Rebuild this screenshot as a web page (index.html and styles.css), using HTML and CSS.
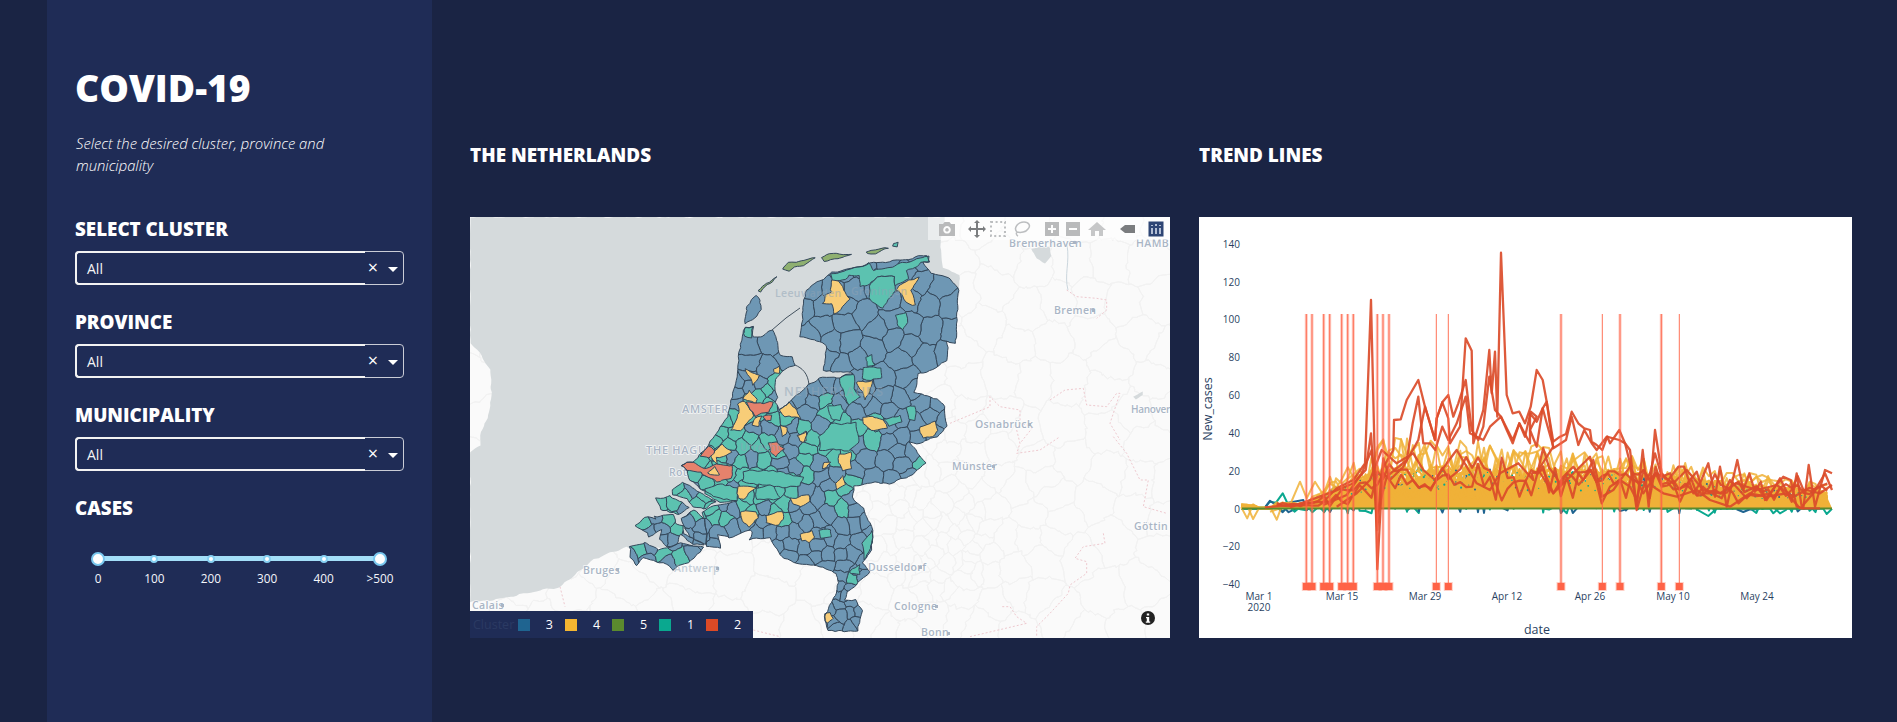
FILE: index.html
```html
<!DOCTYPE html>
<html lang="en">
<head>
<meta charset="utf-8">
<title>COVID-19</title>
<link rel="stylesheet" href="styles.css">
</head>
<body>
<div class="app">
  <aside class="sidebar">
    <h1>COVID-19</h1>
    <p class="intro">Select the desired cluster, province and municipality</p>
    <h3 class="label label-first">SELECT CLUSTER</h3>
    <div class="select"><div class="value">All</div><div class="controls"><span class="clear">×</span><span class="caret"></span></div></div>
    <h3 class="label">PROVINCE</h3>
    <div class="select"><div class="value">All</div><div class="controls"><span class="clear">×</span><span class="caret"></span></div></div>
    <h3 class="label">MUNICIPALITY</h3>
    <div class="select"><div class="value">All</div><div class="controls"><span class="clear">×</span><span class="caret"></span></div></div>
    <h3 class="label">CASES</h3>
    <div class="slider">
      <div class="track">
        <span class="handle"></span><span class="dot"></span><span class="dot"></span><span class="dot"></span><span class="dot"></span><span class="handle"></span>
      </div>
      <div class="marks"><span>0</span><span>100</span><span>200</span><span>300</span><span>400</span><span>&gt;500</span></div>
    </div>
  </aside>
  <main class="main">
    <section class="col col-map">
      <h2>THE NETHERLANDS</h2>
      <div class="panel map">
        <svg class="map-svg" viewBox="470 217 700 421" width="700" height="421">
          <defs><clipPath id="nl"></clipPath></defs>
          <rect class="land" x="470" y="217" width="700" height="421"/>
          <g id="roads"></g>
          <g id="borders"></g>
          <path id="sea" class="sea" d=""/>
          <g id="water"></g>
          <g class="city">
            <text x="1009" y="247">Bremerhaven</text>
            <text class="caps-clip" x="1136" y="247">HAMB</text>
            <text x="1054" y="314">Bremen</text>
            <text x="975" y="428">Osnabrück</text>
            <text class="tight" x="1131" y="413">Hanover</text>
            <text x="952" y="470">Münster</text>
            <text x="1134" y="530">Göttin</text>
            <text x="868" y="571">Dusseldorf</text>
            <text x="894" y="610">Cologne</text>
            <text x="921" y="636">Bonn</text>
            <text x="583" y="574">Bruges</text>
            <text x="472" y="609">Calais</text>
            <text class="caps" x="646" y="454">THE HAGUE</text>
            <text class="caps" x="682" y="413">AMSTERDAM</text>
            <text x="669" y="476">Rotterdam</text>
            <rect x="1073" y="241" width="3" height="3"/><rect x="1092" y="309" width="3" height="3"/><rect x="1028" y="423" width="3" height="3"/>
            <rect x="992" y="465" width="3" height="3"/><rect x="919" y="566" width="3" height="3"/><rect x="935" y="605" width="3" height="3"/>
            <rect x="947" y="632" width="3" height="3"/><rect x="616" y="568" width="3" height="3"/><rect x="716" y="567" width="3" height="3"/><rect x="501" y="604" width="3" height="3"/>
          </g>
          <g id="cells"></g>
          <g id="shapes"></g>
          <path id="outline" class="outline" d=""/>
          <path id="dikes" class="dike" d=""/>
          <g class="city city-over">
            <text x="775" y="297">Leeuwarden</text>
            <text x="851" y="295">Groningen</text>
            <text class="caps big" x="784" y="396">NETHERLANDS</text>
            <text x="740" y="451">Utrecht</text>
            <text x="674" y="572">Antwerp</text>
          </g>
        </svg>
        <div class="modebar">
          <span class="tool tool-a"><svg viewBox="0 0 20 20"><path class="ic" fill-rule="evenodd" d="M2 5h4l1.500-2h5L14 5h4v12H2zM10 7a3.800 3.800 0 1 0 .01 0zM10 9a1.800 1.800 0 1 1-.01 0z"/></svg></span>
          <span class="tool tool-b"><svg viewBox="0 0 20 20"><path class="ic-dark" d="M10 1l3 3h-2v5h5V7l3 3-3 3v-2h-5v5h2l-3 3-3-3h2v-5H4v2l-3-3 3-3v2h5V4H7z"/></svg></span>
          <span class="tool tool-c"><svg viewBox="0 0 20 20"><rect class="ic-dash" x="3" y="3" width="14" height="14"/></svg></span>
          <span class="tool tool-d"><svg viewBox="0 0 20 20"><path class="ic-line" d="M5 13C1 9 6 3 12 3c5 0 7 4 4 7-2 3-7 4-11 3zM5 13c-1 1-1 3 1 4"/></svg></span>
          <span class="tool tool-b"><svg viewBox="0 0 20 20"><path class="ic" fill-rule="evenodd" d="M3 3h14v14H3zM9 6v3H6v2h3v3h2v-3h3V9h-3V6z"/></svg></span>
          <span class="tool tool-c"><svg viewBox="0 0 20 20"><path class="ic" fill-rule="evenodd" d="M3 3h14v14H3zM6 9v2h8V9z"/></svg></span>
          <span class="tool tool-d"><svg viewBox="0 0 20 20"><path class="ic-soft" d="M10 3l9 8h-3v6h-4v-5H8v5H4v-6H1z"/></svg></span>
          <span class="tool tool-b"><svg viewBox="0 0 20 20"><path class="ic-dark" d="M3 10l5-4h10v8H8z"/></svg></span>
          <span class="tool tool-a"><svg viewBox="0 0 20 20"><rect class="ic-active" x="2.500" y="2.500" width="15" height="15"/><path class="ic-bars" d="M6 6v1M6 9v6M10 5v2M10 9v6M14 6v1M14 9v6"/></svg></span>
        </div>
        <div class="legend">
          <span class="legend-title">Cluster</span>
          <span class="legend-item"><i class="swatch s3"></i>3</span>
          <span class="legend-item"><i class="swatch s4"></i>4</span>
          <span class="legend-item"><i class="swatch s5"></i>5</span>
          <span class="legend-item"><i class="swatch s1"></i>1</span>
          <span class="legend-item"><i class="swatch s2"></i>2</span>
        </div>
        <svg class="info" viewBox="0 0 14 14"><circle class="info-bg" cx="7" cy="7" r="7"/><path class="info-i" d="M5.800 2.600h2.400v2H5.800zM5 6h3.200v4.400h1v1.300H4.800v-1.300h1V7.300H5z"/></svg>
      </div>
    </section>
    <section class="col col-chart">
      <h2>TREND LINES</h2>
      <div class="panel chart">
        <svg class="chart-svg" viewBox="1199 217 653 421" width="653" height="421">
          <g id="lines-low"></g>
          <g id="lines-yellow"></g>
          <g id="specks"></g>
          <path class="zero" d="M1242 508.600H1832"/>
          <g id="lines-red"></g>
          <g id="events"></g>
          <g class="ytick">
            <text x="1240" y="247.500">140</text><text x="1240" y="285.500">120</text><text x="1240" y="322.500">100</text><text x="1240" y="360.500">80</text><text x="1240" y="398.500">60</text>
            <text x="1240" y="436.500">40</text><text x="1240" y="474.500">20</text><text x="1240" y="512.500">0</text><text x="1240" y="549.500">−20</text><text x="1240" y="587.500">−40</text>
          </g>
          <g class="xtick">
            <text x="1259" y="599.500">Mar 1</text><text x="1259" y="611">2020</text>
            <text x="1342" y="599.500">Mar 15</text><text x="1425" y="599.500">Mar 29</text><text x="1507" y="599.500">Apr 12</text>
            <text x="1590" y="599.500">Apr 26</text><text x="1673" y="599.500">May 10</text><text x="1757" y="599.500">May 24</text>
          </g>
          <text class="axis-x" x="1537" y="634">date</text>
          <text class="axis-y" transform="translate(1212 409) rotate(-90)">New_cases</text>
        </svg>
      </div>
    </section>
  </main>
</div>
<script src="script.js"></script>
</body>
</html>
```
FILE: styles.css
```css
* { box-sizing: border-box; }
html, body { margin: 0; height: 100%; }
body { background: #1a2444; color: #fff; font-family: "Open Sans", "Liberation Sans", sans-serif; overflow: hidden; }
.app { display: flex; height: 722px; padding-left: 47px; }

.sidebar { width: 385px; height: 722px; background: #1f2c56; padding: 66px 28px 0; flex: none; }
h1 { margin: 0 0 23px; font-size: 37.300px; line-height: 43px; font-weight: 800; }
.intro { margin: 0 0 0 1px; width: 280px; font-size: 14.800px; line-height: 22px; font-style: italic; font-weight: 300; }
.label { margin: 25px 0 10px; font-size: 18.800px; line-height: 24px; font-weight: 800; }
.label-first { margin-top: 41px; }

.select { display: flex; height: 34px; width: 329px; border: 1px solid #c9ccd6; border-radius: 4px; }
.value { flex: 1; margin: -1px 0 -1px -1px; border: 2px solid #f2f2f2; border-right: 0; border-radius: 4px 0 0 4px; padding: 0 10px; font-size: 14px; line-height: 32px; color: #f4f4f4; }
.controls { width: 38px; display: flex; align-items: center; justify-content: flex-start; }
.clear { width: 14px; margin-left: 1px; font-size: 18px; line-height: 28px; height: 30px; text-align: center; }
.caret { margin-left: 8px; margin-top: 2px; border: 5px solid transparent; border-top-color: #fff; border-bottom: 0; }

.slider { margin: 36px 0 0 23px; width: 282px; }
.track { height: 5px; background: #a3dff8; display: flex; justify-content: space-between; align-items: center; }
.handle { width: 14px; height: 14px; margin: 0 -7px; border-radius: 50%; background: #fff; border: 2px solid #79c7ee; }
.dot { width: 8px; height: 8px; margin: 0 -4px; border-radius: 50%; background: #fff; border: 2px solid #86d0f2; }
.marks { display: flex; justify-content: space-between; margin-top: 10px; font-size: 11.800px; line-height: 15px; color: #f4f6fb; }
.marks span { width: 0; display: flex; justify-content: center; }

.main { display: flex; padding-left: 38px; gap: 29px; }
.col { display: flex; flex-direction: column; padding-top: 143px; }
.col-map { width: 700px; }
.col-chart { width: 653px; }
h2 { margin: 0 0 50px; font-size: 18.900px; line-height: 24px; font-weight: 800; }
.panel { height: 421px; position: relative; overflow: hidden; }
.map-svg, .chart-svg { display: block; }
.chart { background: #fff; }

.land { fill: #fafafa; }
.sea { fill: #d5dadc; }
.road { fill: none; stroke: #f2f2f2; stroke-width: 1; }
.border-line { fill: none; stroke: #eec9cf; stroke-width: 1; stroke-dasharray: 2 2; }
.water-blob { fill: #d5dadc; }
.river { fill: none; stroke: #cbd6dd; stroke-width: 1; }
.city { font-family: "Open Sans", sans-serif; font-size: 10.500px; font-weight: 600; letter-spacing: .35px; fill: #a9b5c5; }
.city text { paint-order: stroke; stroke: #fff; stroke-opacity: .75; stroke-width: 1.500px; }
.city .caps { font-size: 11px; letter-spacing: .7px; }
.city .caps-clip { font-size: 10.500px; letter-spacing: .4px; }
.city .big { font-size: 12.500px; letter-spacing: 1px; }
.city .tight { letter-spacing: -.3px; font-size: 10px; }
.city-over { opacity: .5; fill: #8fa3b5; }
.city-over text { stroke: none; }
.cell, .shape { stroke: #34475a; stroke-width: 1; stroke-linejoin: round; }
.c1 { fill: #5cc2b0; }
.c2 { fill: #e5826c; }
.c3 { fill: #6e97b4; }
.c4 { fill: #f8cd78; }
.c5 { fill: #8fb070; }
.outline { fill: none; stroke: #34475a; stroke-width: 1; stroke-linejoin: round; }
.dike { fill: none; stroke: #44525f; stroke-width: 1; }

.modebar { position: absolute; top: 0; left: 458px; width: 242px; height: 23px; background: rgba(255, 255, 255, .5); display: flex; align-items: center; }
.tool { width: 20px; height: 20px; display: block; flex: none; }
.tool svg { display: block; width: 20px; height: 20px; }
.tool-a { margin-left: 9px; }
.tool-b { margin-left: 10px; }
.tool-c { margin-left: 1px; }
.tool-d { margin-left: 4px; }
.ic { fill: #b9babb; }
.ic-soft { fill: #c6c7c8; }
.ic-dark { fill: #7b7d7f; }
.ic-dash { fill: none; stroke: #bcbec0; stroke-width: 2; stroke-dasharray: 2 2.600; }
.ic-line { fill: none; stroke: #bcbec0; stroke-width: 1.500; }
.ic-active { fill: #2f4675; }
.ic-bars { fill: none; stroke: #dfe6f3; stroke-width: 1.500; }

.legend { position: absolute; left: 0; bottom: 0; width: 283px; height: 27px; background: #1f2c56; display: flex; align-items: center; font-size: 12.500px; }
.legend-title { width: 50px; padding-left: 3px; color: #2b3a63; }
.legend-item { width: 49.300px; display: flex; align-items: center; line-height: 27px; }
.swatch { width: 12px; height: 12px; margin-right: 16px; }
.s1 { background: #0aa88f; }
.s2 { background: #dc4a26; }
.s3 { background: #1f6490; }
.s4 { background: #f4b631; }
.s5 { background: #5b8a2e; }
.info { position: absolute; right: 15px; bottom: 13px; width: 14px; height: 14px; }
.info-bg { fill: #222; }
.info-i { fill: #fff; }

.ytick text { font-size: 10px; fill: #2a3f5f; text-anchor: end; }
.xtick text { font-size: 10px; fill: #2a3f5f; text-anchor: middle; }
.axis-x, .axis-y { font-size: 12.500px; fill: #2a3f5f; text-anchor: middle; }
.zero { stroke: #5b8a2e; stroke-width: 2; fill: none; }
.ln { fill: none; stroke-linejoin: round; }
.ln-y { stroke: #f0b138; stroke-width: 2; }
.ln-y2 { stroke: #f0b138; stroke-width: 2; opacity: .85; }
.area-y { fill: #f0b138; }
.ln-t { stroke: #0aa88f; stroke-width: 2; }
.ln-b { stroke: #1f6490; stroke-width: 2; }
.ln-r { stroke: #db4c2a; stroke-width: 2.300; opacity: .92; }
.speck-t { fill: #0aa88f; }
.speck-b { fill: #1f6490; }
.ev-halo { stroke: #ff6347; stroke-width: 3; opacity: .35; }
.ev-line { stroke: #ff6347; stroke-width: 1; opacity: .9; }
.ev-mark { fill: #ff6347; stroke: #ff6347; stroke-opacity: .3; stroke-width: 2; }
```
FILE: script.js
```js
(function () {
  var NS = 'http://www.w3.org/2000/svg';
  var OFF = { 3: [460, 210], 4: [820, 210], 5: [460, 430], 6: [820, 430], 7: [1190, 210], 8: [1190, 430], 9: [1530, 210], 10: [1530, 430] };
  function P(z, a) {
    var o = OFF[z], r = [];
    for (var i = 0; i < a.length; i += 2) r.push([o[0] + a[i] / 3, o[1] + a[i + 1] / 3]);
    return r;
  }
  function A(a) {
    var r = [];
    for (var i = 0; i < a.length; i += 2) r.push([a[i], a[i + 1]]);
    return r;
  }
  var seed = 20200301;
  function rnd() {
    seed = (seed + 0x6D2B79F5) | 0;
    var t = Math.imul(seed ^ (seed >>> 15), 1 | seed);
    t = (t + Math.imul(t ^ (t >>> 7), 61 | t)) ^ t;
    return ((t ^ (t >>> 14)) >>> 0) / 4294967296;
  }
  function add(parent, tag, cls, attrs) {
    var e = document.createElementNS(NS, tag);
    if (cls) e.setAttribute('class', cls);
    for (var k in attrs) e.setAttribute(k, attrs[k]);
    parent.appendChild(e);
    return e;
  }
  function el(id) { return document.getElementById(id); }

  /* ---------- map geometry ---------- */
  function wob(poly, amp) {
    var d = '';
    for (var i = 0; i < poly.length; i++) {
      var a = poly[i], b = poly[(i + 1) % poly.length];
      var len = Math.hypot(b[0] - a[0], b[1] - a[1]), n = Math.max(1, Math.ceil(len / 3.5));
      for (var k = 0; k < n; k++) {
        var x = a[0] + (b[0] - a[0]) * k / n, y = a[1] + (b[1] - a[1]) * k / n;
        var dx = amp * (Math.sin(x * .31 + y * .17) + .6 * Math.sin(x * .73 - y * .41) + .45 * Math.sin(x * 1.7 + y * 1.3));
        var dy = amp * (Math.sin(x * .23 - y * .29) + .6 * Math.sin(x * .61 + y * .53) + .45 * Math.sin(x * 1.4 - y * 1.9));
        d += (d ? 'L' : 'M') + (x + dx).toFixed(1) + ' ' + (y + dy).toFixed(1);
      }
    }
    return d + 'Z';
  }
  function clipHalf(poly, ax, ay, bx, by) {
    var mx = (ax + bx) / 2, my = (ay + by) / 2, nx = bx - ax, ny = by - ay, out = [];
    for (var i = 0; i < poly.length; i++) {
      var p = poly[i], q = poly[(i + 1) % poly.length];
      var dp = (p[0] - mx) * nx + (p[1] - my) * ny, dq = (q[0] - mx) * nx + (q[1] - my) * ny;
      if (dp <= 0) out.push(p);
      if ((dp < 0 && dq > 0) || (dp > 0 && dq < 0)) {
        var t = dp / (dp - dq);
        out.push([p[0] + (q[0] - p[0]) * t, p[1] + (q[1] - p[1]) * t]);
      }
    }
    return out;
  }
  function voronoi(sites, box) {
    return sites.map(function (s, i) {
      var poly = box;
      for (var j = 0; j < sites.length && poly.length; j++) {
        if (j !== i && Math.abs(sites[j][0] - s[0]) < 150 && Math.abs(sites[j][1] - s[1]) < 150) poly = clipHalf(poly, s[0], s[1], sites[j][0], sites[j][1]);
      }
      return poly;
    });
  }
  function inside(pt, poly) {
    var c = false;
    for (var i = 0, j = poly.length - 1; i < poly.length; j = i++) {
      if ((poly[i][1] > pt[1]) !== (poly[j][1] > pt[1]) && pt[0] < (poly[j][0] - poly[i][0]) * (pt[1] - poly[i][1]) / (poly[j][1] - poly[i][1]) + poly[i][0]) c = !c;
    }
    return c;
  }
  function dart(test, radius, box, tries) {
    var pts = [];
    for (var n = 0; n < tries; n++) {
      var p = [box[0] + rnd() * (box[2] - box[0]), box[1] + rnd() * (box[3] - box[1])];
      if (!test(p)) continue;
      var r = radius(p), ok = true;
      for (var i = 0; i < pts.length; i++) {
        if (Math.hypot(pts[i][0] - p[0], pts[i][1] - p[1]) < r) { ok = false; break; }
      }
      if (ok) pts.push(p);
    }
    return pts;
  }

  /* outlines of the mainland and the islands */
  var main = A([745,327, 753,327, 752,337, 763,336, 772,330, 778,343, 780,355, 793,357, 795,365, 788,368, 780,373, 775,380, 777,397, 775,403, 780,410, 790,402, 808,385, 820,378, 840,377, 853,373, 838,372, 824,370, 826,345, 820,341, 800,337, 803,307, 807,290, 820,280,
    832,273, 873,263, 903,260, 927,255, 930,262, 923,263, 930,273, 948,278, 958,288, 957,300, 958,310, 955,343, 947,342, 947,360, 927,373, 917,373, 918,383, 915,392, 937,400, 945,407, 946,427, 937,437, 920,443, 910,443, 925,463, 913,475, 890,483, 868,483, 853,487, 853,497, 863,508, 873,530, 872,550, 863,563, 870,572, 858,582, 848,592, 845,600, 855,600, 862,610, 857,630, 848,632, 828,630, 824,617, 832,600, 836,592, 838,580, 837,573, 820,567,
    793,562, 780,555, 770,537, 750,540, 753,532, 748,530, 730,538, 718,535, 720,548, 707,547, 705,520, 702,512, 717,505, 737,502, 720,498, 703,490, 690,480, 687,470, 681,465, 693,462, 705,450, 718,430, 727,417, 737,380, 738,357, 743,337]);
  var islands = [
    P(5, [635,180,670,158,720,190,770,215,740,235,700,230,680,205,640,195]),
    P(5, [590,205,630,198,640,205,690,235,650,252,600,240]),
    P(5, [527,287,555,262,585,265,580,258,640,255,645,280,670,290,670,310,690,320,730,345,700,340,660,310,650,345,620,348,598,325,605,300,565,320,560,310]),
    P(5, [510,350,555,338,595,360,660,340,730,350,700,385,640,420,620,400,550,385,530,405,510,380]),
    P(5, [665,265,700,240,735,270,740,345,725,340,690,320,672,295])
  ];
  var outlines = [main].concat(islands);
  function inNL(p) { return outlines.some(function (o) { return inside(p, o); }); }

  var clip = el('nl'), outlineD = '';
  outlines.forEach(function (o) {
    var d = wob(o, .6);
    add(clip, 'path', '', { d: d });
    outlineD += d;
  });
  el('outline').setAttribute('d', outlineD);
  el('dikes').setAttribute('d', 'M772 330L786 318L800 308M795 365C802 368 808 373 809 385');

  /* sea */
  var sea = A([470,217, 945,217, 940,247, 943,267, 960,275, 958,300, 900,390, 860,380, 800,420, 740,500, 720,535, 718,545, 660,548, 632,550, 627,547, 613,552, 593,560, 560,587, 527,593, 493,600, 470,602, 470,452, 481,445, 480,435, 488,415, 492,393, 490,370, 480,352, 470,343]);
  el('sea').setAttribute('d', wob(sea, .5));

  /* background road network */
  var roads = el('roads');
  var roadSites = dart(function () { return true; }, function (p) {
    var d = Math.hypot(p[0] - 935, p[1] - 530);
    return d < 60 ? 9 : (d < 130 ? 20 : 30);
  }, [470, 217, 1170, 638], 4000);
  voronoi(roadSites, [[440, 190], [1200, 190], [1200, 670], [440, 670]]).forEach(function (c) {
    if (c.length) add(roads, 'path', 'road', { d: wob(c, 1.6) });
  });

  /* dashed borders */
  var borders = el('borders');
  [
    P(4, [740,240,770,260,830,265,860,270,860,300,830,325]),
    P(4, [390,640,510,590,510,560,540,590,600,600,600,640,640,650,600,700]),
    P(4, [690,570,735,540,790,535,800,585,860,590,890,550,900,550,880,610,870,640,900,690]),
    P(6, [590,0,600,40,590,70,660,60,720,20]),
    P(6, [880,20,920,70,960,150,985,150,970,230,1040,250]),
    P(6, [850,310,855,340,790,350,765,385,800,395,800,430,750,465,745,490,690,550,650,590,650,620]),
    P(6, [450,620,620,580,590,560,570,530,545,530]),
    P(5, [300,470,315,530]),
    P(5, [880,600,960,620])
  ].forEach(function (l) {
    add(borders, 'polyline', 'border-line', { points: l.map(function (p) { return p.join(','); }).join(' ') });
  });

  /* water on the German side */
  var water = el('water');
  add(water, 'path', 'water-blob', { d: wob(P(4, [635,115,690,110,695,140,675,160,650,145]), .4) });
  add(water, 'path', 'water-blob', { d: wob(P(4, [940,560,968,545,968,555,948,568]), .15) });
  add(water, 'path', 'river', { d: 'M1067 245C1070 262 1064 275 1068 290' });

  /* municipalities */
  function radius(p) {
    var x = p[0], y = p[1];
    if (y < 375) return 17;
    if (x < 800 && y < 525) return 10;
    if (y > 575) return 7.5;
    if (x > 860) return 13;
    return 11;
  }
  var sites = dart(inNL, radius, [625, 250, 965, 635], 18000);
  function colorFor(s) {
    var x = s[0], y = s[1], r = rnd();
    if (y < 375) return 3;
    if (x < 790 && y >= 375 && y < 520) return r < .68 ? 1 : 3;
    if (x >= 790 && x < 880 && y >= 420 && y < 490) return r < .5 ? 1 : 3;
    if (x >= 790 && x < 880 && y >= 395 && y < 505) return r < .3 ? 1 : 3;
    if (y >= 505 && x < 780) return r < .22 ? 1 : 3;
    return r < .05 ? 1 : 3;
  }
  var cellsG = add(el('cells'), 'g', '', { 'clip-path': 'url(#nl)' });
  voronoi(sites, [[600, 230], [990, 230], [990, 660], [600, 660]]).forEach(function (c, i) {
    if (c.length) add(cellsG, 'path', 'cell c' + colorFor(sites[i]), { d: wob(c, .9) });
  });

  /* hand-placed patches */
  var shapes = [
    [3, 3, [855,320,860,285,885,255,903,270,903,300,880,330,855,340]],
    [1, 3, [855,350,878,350,872,385,855,382]],
    [5, 3, [892,240,920,218,952,202,925,225,900,243]],
    [5, 3, [968,175,985,160,1065,145,1040,160,985,182]],
    [5, 4, [5,140,30,132,95,132,60,145,15,152]],
    [5, 4, [137,125,205,112,175,127,145,132]],
    [1, 4, [222,100,235,100,232,110,222,108]],
    [1, 4, [32,195,148,160,160,183,232,165,327,138,328,155,305,160,258,185,262,205,225,230,225,200,175,200,150,225,118,228,120,200,85,195,75,210,40,215]],
    [1, 4, [175,200,225,200,225,240,190,295,150,270,150,230]],
    [1, 4, [230,315,258,308,262,335,245,360,232,350]],
    [1, 4, [135,440,155,435,165,465,145,470]],
    [1, 4, [130,475,180,470,188,505,150,510,130,505]],
    [1, 4, [60,500,100,495,105,535,120,560,90,585,70,560]],
    [1, 4, [35,640,110,640,115,700,85,720,0,720,-5,680]],
    [1, 4, [25,590,60,585,75,605,60,630,30,625]],
    [1, 4, [190,625,243,618,245,635,205,650]],
    [1, 4, [262,590,285,590,285,630,265,630]],
    [1, 6, [125,340,155,300,160,340,135,390]],
    [1, 6, [85,430,120,402,120,435]],
    [1, 6, [0,300,30,300,35,322,0,322]],
    [1, 5, [735,175,790,160,835,175,832,215,780,215,735,190]],
    [1, 5, [890,175,935,165,960,205,890,210]],
    [1, 5, [850,125,920,120,1030,140,1020,170,940,170,850,155]],
    [4, 4, [35,210,55,215,70,240,90,265,65,300,45,310,35,280,10,280,20,255,35,245]],
    [4, 4, [265,210,300,205,275,240,285,285,265,280,245,250,225,240,240,225]],
    [4, 4, [130,620,145,620,190,630,200,655,155,660,130,640]],
    [4, 4, [300,650,345,635,355,660,340,680,310,685,300,670]],
    [4, 4, [110,520,155,510,150,545,135,570,125,545]],
    [4, 6, [60,75,90,65,95,115,65,120,55,95]],
    [4, 6, [45,160,70,138,78,165,50,178]],
    [4, 6, [12,555,30,545,42,565,25,580,15,575]],
    [4, 6, [8,100,30,95,20,115,5,115]],
    [4, 5, [835,170,890,170,865,190,850,205,835,205]],
    [4, 5, [990,205,1045,195,1050,215,1020,230,1000,225]],
    [4, 5, [840,245,885,245,892,265,865,290,848,270]],
    [4, 5, [920,255,970,245,972,270,955,285,920,280]],
    [4, 5, [1020,315,1055,300,1068,320,1050,338,1025,330]],
    [4, 5, [1010,15,1035,5,1040,30,1022,38]],
    [4, 5, [750,70,790,45,812,68,798,78,770,80,772,105,755,85]],
    [4, 3, [858,475,880,490,900,495,880,530,865,500]],
    [4, 3, [848,570,870,540,890,565,885,578,855,570]],
    [4, 3, [830,580,855,575,880,615,840,660,815,660,840,610]],
    [4, 3, [880,625,905,620,895,650,880,645]],
    [4, 3, [960,600,990,575,1010,600,1025,625,975,620]],
    [4, 3, [1010,675,1040,665,1035,695,1018,695]],
    [4, 3, [940,475,955,470,958,488,942,488]],
    [4, 3, [960,650,980,650,980,675,965,680]],
    [2, 3, [860,578,940,578,925,605,890,620,870,600]],
    [2, 3, [910,620,932,615,930,632,915,635]],
    [2, 5, [722,80,745,45,765,60,745,85]],
    [2, 5, [662,105,700,95,730,115,770,105,820,105,815,145,770,155,720,130,680,120]],
    [4, 5, [745,130,765,112,778,135]],
    [2, 5, [925,40,945,38,975,55,950,80,930,65]]
  ];
  var shapeG = el('shapes');
  shapes.forEach(function (s) {
    add(shapeG, 'path', 'shape c' + s[0], { d: wob(P(s[1], s[2]), .7) });
  });

  /* ---------- chart ---------- */
  function X(d) { return 1259 + 5.92 * d; }
  function Y(v) { return 508.6 - 1.89 * v; }
  function pts(a) { return a.map(function (p) { return p[0].toFixed(1) + ',' + p[1].toFixed(1); }).join(' '); }
  function env(d) {
    if (d < 0) return 1.5;
    if (d < 3) return .4;
    if (d < 8) return 2;
    if (d < 21) return 2 + (d - 8) * 1.4;
    if (d < 58) return 20 - (d - 21) * .06;
    return Math.max(7, 18 - (d - 58) * .27);
  }
  function series(fn) {
    var a = [];
    for (var d = -3; d <= 96.8; d++) a.push([X(d), Y(fn(d))]);
    return a;
  }
  var low = el('lines-low');
  for (var i = 0; i < 6; i++) {
    add(low, 'polyline', 'ln ' + (i % 3 ? 'ln-t' : 'ln-b'), { points: pts(series(function (d) {
      if (d < 3) return 0;
      return (rnd() < .12 ? -rnd() * 2.6 : env(d) * rnd() * 1.1);
    })) });
  }
  add(low, 'polyline', 'ln ln-t', { points: pts(P(8, [155,235,225,232,240,215,258,218,278,190,295,225,320,232])) });
  add(low, 'polyline', 'ln ln-b', { points: pts(P(8, [225,232,240,212,258,225,340,210,350,240,400,205,435,170,450,230])) });
  add(low, 'polyline', 'ln ln-t', { points: pts(P(10, [500,238,535,258,560,236,720,236,730,250,745,236,880,236,890,252,906,236])) });
  add(low, 'polyline', 'ln ln-b', { points: pts(P(10, [620,238,640,246,660,238])) });

  var yel = el('lines-yellow');
  var area = [[X(-3), Y(0)]];
  for (var d0 = -3; d0 <= 96.8; d0 += 1) area.push([X(d0), Y(env(d0) * (.68 + rnd() * .2))]);
  area.push([X(96.8), Y(0)]);
  add(yel, 'polygon', 'area-y', { points: pts(area) });
  for (var j = 0; j < 20; j++) {
    add(yel, 'polyline', 'ln ln-y', { points: pts(series(function (d) {
      var r = rnd();
      return env(d) * (j < 8 ? .5 + r * .7 : .25 + r * .6);
    })) });
  }
  for (var k = 0; k < 5; k++) {
    add(yel, 'polyline', 'ln ln-y2', { points: pts(series(function (d) {
      return env(d) * (.5 + rnd() * (d > 8 && d < 50 ? 1.4 : 1.2)) - (rnd() < .04 ? 7 : 0);
    })) });
  }
  add(yel, 'polyline', 'ln ln-y2', { points: pts(P(8, [240,245,300,225,330,155,350,205,375,155,400,195,420,140,445,210])) });
  var sp = el('specks');
  for (var m = 0; m < 130; m++) {
    var dd = 14 + rnd() * 80, vv = env(dd) * (.5 + rnd() * .55);
    add(sp, 'circle', rnd() < .75 ? 'speck-t' : 'speck-b', { cx: X(dd).toFixed(1), cy: Y(vv).toFixed(1), r: (.5 + rnd() * .6).toFixed(1) });
  }

  var red = el('lines-red');
  function redEnv(d) {
    if (d < 10) return 3;
    if (d < 20) return 3 + (d - 10) * 1.6;
    if (d < 62) return 20;
    if (d < 72) return 20 - (d - 62) * .6;
    return 12;
  }
  for (var q = 0; q < 2; q++) {
    add(red, 'polyline', 'ln ln-r', { points: pts((function () {
      var a = [], v = 0;
      for (var d = 3; d <= 96.8; d++) {
        var e = redEnv(d);
        v = v * .45 + e * (.3 + rnd() * .9) * .6;
        a.push([X(d), Y(d < 8 ? 1 + rnd() * 2 : v + (rnd() < .12 ? e * .5 : 0) - (rnd() < .1 ? v * .6 : 0))]);
      }
      return a;
    })()) });
  }
  var traces = [
    P(8, [225,232,300,225,400,215,440,175,490,150,525,100]).concat(P(7, [543,270]), P(8, [562,418,580,85,600,150,640,110,685,30]), P(7, [705,590,735,690,740,625,757,577,775,625,780,700,810,650,827,385,845,422,850,700,880,600,898,420,905,550,915,425,922,620,933,128,950,555,968,610,988,605,1005,640,1022,590,1040,480]), P(9, [20,480,38,510,50,575,70,695,90,680,108,672,125,605,145,640,163,655,180,660,185,695,200,705,217,720,232,680,240,700,268,660,285,700,300,720]), P(10, [320,230,338,60,356,230,375,0,395,130,415,150,445,110,462,110,490,190,510,160,535,100,555,200,570,110,590,230,622,90,640,180,658,130,675,185,692,155,705,210,735,170,760,140,782,150,800,230,820,235,836,105,855,230,885,120,906,130])),
    P(8, [300,232,430,185,490,160,527,120,543,10,562,300,575,120,610,60]).concat(P(7, [612,630,632,628,650,570,685,510,705,590,735,690,740,625,757,577,775,555,790,620,805,580,827,510,845,660,865,690,880,650,898,500,915,600,933,620,950,660,968,700,988,640,1005,680,1022,605,1040,620]), P(9, [0,660,20,710,38,595,50,575,70,715,108,690,125,620,145,705,163,660,185,700,200,720]), P(10, [230,20,268,30,285,40,300,100,320,240,340,170,360,130,375,70,395,140,420,130,450,215,480,150,500,125,520,190,545,190,575,205,600,150,650,205,680,170,710,210,750,145,785,215,800,130,815,230,850,190,885,130,906,180])),
    P(8, [400,225,470,195,515,130,545,60,562,250,590,140,650,90]).concat(P(7, [668,640,685,560,700,700,720,700,736,720,757,650,775,690,800,640,827,560,840,670,880,690,900,650,933,620,968,690,988,640,1020,700]), P(9, [0,610,20,635,38,595,50,640,70,710]), P(10, [25,120,70,190,110,150,140,120,180,80,215,220,240,170,270,150,300,170,320,210,340,120,370,170,400,190,440,200,500,180,540,210,600,230,660,190,710,200,770,190,810,235,870,235])),
    P(8, [440,230,500,190,540,150,575,60,620,100,670,70,700,120,735,150,770,100,800,60,860,160,900,180,930,130,985,100,1030,150]).concat(P(10, [5,130,40,120,70,190,100,140,130,110,160,150,190,90,215,200,250,180,300,110,340,190,380,130,430,160,470,120,520,180,570,190,620,160,680,180,740,165,790,200,830,180,870,190,906,165]))
  ];
  traces.forEach(function (t) { add(red, 'polyline', 'ln ln-r', { points: pts(t) }); });

  var ev = el('events');
  [1306.3, 1312, 1323.7, 1329.7, 1341.7, 1347.7, 1353.3, 1377.3, 1383, 1389, 1436.3, 1448.3, 1561, 1602.3, 1620, 1661.3, 1679.3].forEach(function (x, i) {
    if (i !== 10 && i !== 11 && i !== 13 && i !== 16) add(ev, 'line', 'ev-halo', { x1: x, x2: x, y1: 314, y2: 586 });
    add(ev, 'line', 'ev-line', { x1: x, x2: x, y1: 314, y2: 586 });
    add(ev, 'rect', 'ev-mark', { x: x - 3.5, y: 583, width: 7, height: 7 });
  });
})();
```
